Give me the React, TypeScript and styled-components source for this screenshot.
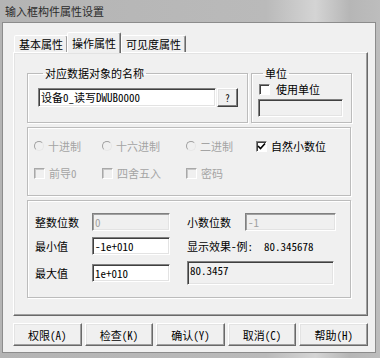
import styled, { createGlobalStyle } from "styled-components";

const FONT = `"Noto Sans Mono CJK SC", "Noto Sans CJK SC", sans-serif`;

const GlobalStyle = createGlobalStyle`
  html, body {
    margin: 0;
    padding: 0;
  }
  body {
    width: 380px;
    height: 358px;
    overflow: hidden;
    background: #bdbdbd;
    font-family: ${FONT};
    font-size: 11px;
    color: #000;
  }
`;

const Window = styled.div`
  width: 380px;
  height: 358px;
  display: flex;
  flex-direction: column;
  box-sizing: border-box;
  background: linear-gradient(90deg, #b4b4b4 0%, #bababa 70%, #d4d4d4 83%, #b6b6b6 92%, #bdbdbd 100%);
`;

const TitleBar = styled.div`
  height: 22px;
  flex: none;
  display: flex;
  align-items: center;
  padding-left: 5px;
  color: #2c2c2c;
  font-size: 11px;
`;

const Client = styled.div`
  flex: 1;
  margin: 0 4px 5px 2px;
  border: 1px solid #8c8c8c;
  background: #f0f0f0;
  padding: 9px 0 0 10px;
  display: flex;
  flex-direction: column;
`;

const TabRow = styled.div`
  display: flex;
  align-items: flex-start;
  height: 20px;
  padding-left: 1px;
`;

const Tab = styled.div<{ $active?: boolean }>`
  position: relative;
  z-index: ${(p) => (p.$active ? 1 : 0)};
  height: ${(p) => (p.$active ? 21 : 17)}px;
  margin-top: ${(p) => (p.$active ? 0 : 3)}px;
  margin-left: ${(p) => (p.$active ? -1 : 0)}px;
  padding: 0 4px;
  display: flex;
  align-items: center;
  box-sizing: border-box;
  background: #f0f0f0;
  border: 1px solid;
  border-bottom: none;
  border-color: #fff #696969 transparent #fff;
  box-shadow: inset -1px 0 #a0a0a0;
  border-radius: 2px 2px 0 0;
`;

const Panel = styled.div`
  width: 355px;
  height: 264px;
  box-sizing: border-box;
  border: 1px solid;
  border-color: #fff #696969 #696969 #fff;
  box-shadow: inset -1px -1px #a0a0a0, inset 1px 1px #e3e3e3;
  padding: 12px 0 0 13px;
  display: flex;
  flex-direction: column;
`;

const TopRow = styled.div`
  display: flex;
  gap: 3px;
`;

const Group = styled.fieldset<{ $width: number; $top: number; $left: number }>`
  margin: 0;
  width: ${(p) => p.$width}px;
  height: 58px;
  box-sizing: border-box;
  min-width: 0;
  border: 1px solid #bcbcbc;
  box-shadow: inset 1px 1px #fff, 1px 1px #fff;
  padding: ${(p) => p.$top}px 0 0 ${(p) => p.$left}px;
`;

const Legend = styled.legend`
  margin-left: 5px;
  padding: 0 2px;
  line-height: 16px;
  font-size: 11px;
`;

const Box = styled.div<{ $height: number }>`
  width: 324px;
  height: ${(p) => p.$height}px;
  box-sizing: border-box;
  margin-top: 4px;
  border: 1px solid #bcbcbc;
  box-shadow: inset 1px 1px #fff, 1px 1px #fff;
`;

const NameRow = styled.div`
  display: flex;
  gap: 1px;
`;

const Field = styled.div<{ $width: number; $height?: number; $disabled?: boolean; $gray?: boolean }>`
  width: ${(p) => p.$width}px;
  height: ${(p) => p.$height ?? 18}px;
  box-sizing: border-box;
  padding: 0 0 0 2px;
  line-height: 16px;
  white-space: nowrap;
  overflow: hidden;
  border: 1px solid;
  border-color: #808080 #fff #fff #808080;
  box-shadow: inset 1px 1px ${(p) => (p.$disabled ? "#a0a0a0" : "#404040")}, inset -1px -1px #e3e3e3;
  background: ${(p) => (p.$disabled || p.$gray ? "#f0f0f0" : "#fff")};
  color: ${(p) => (p.$disabled ? "#a0a0a0" : "#000")};
`;

const SmallButton = styled.div`
  width: 21px;
  height: 19px;
  box-sizing: border-box;
  display: flex;
  align-items: center;
  justify-content: center;
  border: 1px solid;
  border-color: #fff #404040 #404040 #fff;
  box-shadow: inset -1px -1px #808080, inset 1px 1px #e3e3e3;
  font-size: 10px;
`;

const UnitCheck = styled.label`
  display: flex;
  align-items: center;
  gap: 6px;
  height: 16px;
  margin: -1px 0 2px 1px;
`;

const OptionGrid = styled.div`
  display: grid;
  grid-template-columns: 68px 84px 70px 1fr;
  grid-template-rows: 16px 16px;
  row-gap: 11px;
  padding: 10px 0 0 6px;
`;

const Option = styled.div<{ $disabled?: boolean }>`
  display: flex;
  align-items: center;
  gap: 4px;
  color: ${(p) => (p.$disabled ? "#a4a4a4" : "#000")};
`;

const Radio = styled.span`
  width: 10px;
  height: 10px;
  box-sizing: border-box;
  border-radius: 50%;
  border: 1px solid;
  border-color: #a0a0a0 #e6e6e6 #e6e6e6 #a0a0a0;
  background: #f0f0f0;
  flex: none;
`;

const CheckSquare = styled.span<{ $enabled?: boolean }>`
  width: 11px;
  height: 11px;
  box-sizing: border-box;
  border: 1px solid;
  border-color: ${(p) => (p.$enabled ? "#808080 #fff #fff #808080" : "#a8a8a8 #fff #fff #a8a8a8")};
  box-shadow: ${(p) => (p.$enabled ? "inset 1px 1px #404040" : "inset 1px 1px #c8c8c8")};
  background: ${(p) => (p.$enabled ? "#fff" : "#f0f0f0")};
  display: flex;
  align-items: center;
  justify-content: center;
  flex: none;
`;

const NumberGrid = styled.div`
  display: grid;
  grid-template-columns: 57px 78px 17px 58px 91px;
  grid-template-rows: 18px 18px 24px;
  row-gap: 6px;
  padding: 12px 0 0 7px;
  align-items: center;
`;

const Label = styled.div`
  white-space: nowrap;
`;

const Wide = styled.div`
  grid-column: 4 / 6;
  white-space: pre;
  align-self: center;
`;

const ButtonRow = styled.div`
  width: 355px;
  display: flex;
  gap: 3px;
  margin-top: 7px;
`;

const Button = styled.div`
  flex: 1;
  height: 23px;
  box-sizing: border-box;
  display: flex;
  align-items: center;
  justify-content: center;
  border: 1px solid;
  border-color: #fff #696969 #696969 #fff;
  box-shadow: inset -1px -1px #a0a0a0, inset 1px 1px #e3e3e3;
  font-size: 11px;
`;

const Check = () => (
  <svg width="9" height="9" viewBox="0 0 9 9">
    <path d="M1 4 L3.5 6.5 L8 1.5" fill="none" stroke="#000" strokeWidth="1.6" />
  </svg>
);

const App = () => (
  <>
    <GlobalStyle />
    <Window>
      <TitleBar>输入框构件属性设置</TitleBar>
      <Client>
        <TabRow>
          <Tab>基本属性</Tab>
          <Tab $active>操作属性</Tab>
          <Tab>可见度属性</Tab>
        </TabRow>
        <Panel>
          <TopRow>
            <Group $width={221} $top={7} $left={10}>
              <Legend>对应数据对象的名称</Legend>
              <NameRow>
                <Field $width={178} $height={19}>
                  设备0_读写DWUB0000
                </Field>
                <SmallButton>?</SmallButton>
              </NameRow>
            </Group>
            <Group $width={101} $top={1} $left={6}>
              <Legend>单位</Legend>
              <UnitCheck>
                <CheckSquare $enabled />
                使用单位
              </UnitCheck>
              <Field $width={85} $gray />
            </Group>
          </TopRow>

          <Box $height={69}>
            <OptionGrid>
              <Option $disabled>
                <Radio />
                十进制
              </Option>
              <Option $disabled>
                <Radio />
                十六进制
              </Option>
              <Option $disabled>
                <Radio />
                二进制
              </Option>
              <Option>
                <CheckSquare $enabled>
                  <Check />
                </CheckSquare>
                自然小数位
              </Option>
              <Option $disabled>
                <CheckSquare />
                前导0
              </Option>
              <Option $disabled>
                <CheckSquare />
                四舍五入
              </Option>
              <Option $disabled>
                <CheckSquare />
                密码
              </Option>
            </OptionGrid>
          </Box>

          <Box $height={98}>
            <NumberGrid>
              <Label>整数位数</Label>
              <Field $width={78} $disabled>
                0
              </Field>
              <span />
              <Label>小数位数</Label>
              <Field $width={91} $disabled>
                -1
              </Field>

              <Label>最小值</Label>
              <Field $width={78}>-1e+010</Field>
              <span />
              <Wide>显示效果-例:  80.345678</Wide>

              <Label>最大值</Label>
              <Field $width={78}>1e+010</Field>
              <span />
              <Wide>
                <Field $width={147} $height={24} $gray>
                  80.3457
                </Field>
              </Wide>
            </NumberGrid>
          </Box>
        </Panel>
        <ButtonRow>
          <Button>权限(A)</Button>
          <Button>检查(K)</Button>
          <Button>确认(Y)</Button>
          <Button>取消(C)</Button>
          <Button>帮助(H)</Button>
        </ButtonRow>
      </Client>
    </Window>
  </>
);

export default App;
